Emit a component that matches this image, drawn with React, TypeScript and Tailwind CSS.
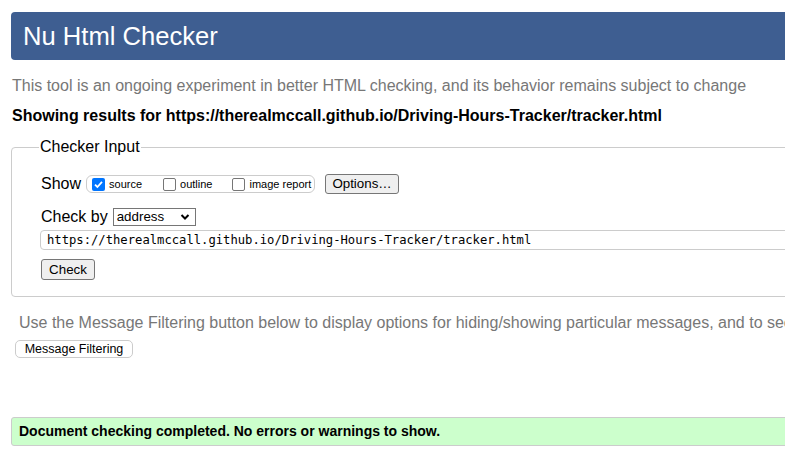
import React from "react";

function Check({ checked }: { checked?: boolean }) {
  if (checked) {
    return (
      <span className="inline-flex h-[13px] w-[13px] items-center justify-center rounded-[2px] bg-[#0075ff]">
        <svg width="11" height="11" viewBox="0 0 11 11">
          <path d="M2 5.6 L4.4 8 L9 2.8" stroke="white" strokeWidth="1.8" fill="none" />
        </svg>
      </span>
    );
  }
  return <span className="inline-block h-[13px] w-[13px] rounded-[2px] border border-[#767676] bg-white" />;
}

export default function App() {
  return (
    <div className="h-[452px] w-[785px] overflow-hidden bg-white">
      <div className="w-[1100px] pl-[11px] pt-[12px] font-['Liberation_Sans',Arial,sans-serif] text-black">
        <div className="flex h-[48px] items-center rounded-l-[4px] bg-[#3e5e91] pl-[12px] text-[25.6px] text-white">
          Nu Html Checker
        </div>
        <p className="mt-[16px] pl-[1px] text-[16px] leading-[20px] text-[#777]">
          This tool is an ongoing experiment in better HTML checking, and its behavior remains subject to change
        </p>
        <p className="mt-[10px] pl-[1px] text-[16px] font-bold leading-[20px]">
          Showing results for https://therealmccall.github.io/Driving-Hours-Tracker/tracker.html
        </p>
        <fieldset className="mt-[11px] rounded-[4px] border border-[#ccc] pb-[16px] pl-[29px]">
          <legend className="-ml-[2px] px-[1px] text-[16px] leading-[20px]">Checker Input</legend>
          <div className="mt-[17px] flex h-[20px] items-center">
            <span className="text-[16px] leading-[20px]">Show</span>
            <div className="ml-[5px] flex h-[18px] w-[229px] items-center rounded-[6px] border border-[#ccc] pl-[5px] text-[11px]">
              <Check checked />
              <span className="ml-[4px]">source</span>
              <span className="ml-[21px] flex"><Check /></span>
              <span className="ml-[4px]">outline</span>
              <span className="ml-[20px] flex"><Check /></span>
              <span className="ml-[4px]">image report</span>
            </div>
            <button className="ml-[10px] flex h-[20px] w-[74px] items-center justify-center rounded-[3px] border border-[#767676] bg-[#efefef] text-[13.33px]">
              Options…
            </button>
          </div>
          <div className="mt-[13px] flex h-[20px] items-center">
            <span className="text-[16px] leading-[20px]">Check by</span>
            <div className="ml-[5px] flex h-[18px] w-[83px] items-center justify-between border border-[#767676] bg-white pl-[3px] pr-[5px] text-[13.33px]">
              <span>address</span>
              <svg width="10" height="8" viewBox="0 0 10 8">
                <path d="M1.5 2 L5 5.5 L8.5 2" stroke="black" strokeWidth="2" fill="none" />
              </svg>
            </div>
          </div>
          <div className="-ml-[1px] mt-[3px] flex h-[20px] items-center rounded-l-[4px] border border-[#ccc] pl-[6px] font-['DejaVu_Sans_Mono',monospace] text-[12.2px]">
            https://therealmccall.github.io/Driving-Hours-Tracker/tracker.html
          </div>
          <button className="mt-[9px] flex h-[21px] w-[54px] items-center justify-center rounded-[3px] border border-[#767676] bg-[#efefef] text-[13.33px]">
            Check
          </button>
        </fieldset>
        <p className="mt-[16px] pl-[8px] text-[16px] leading-[20px] text-[#777]">
          Use the Message Filtering button below to display options for hiding/showing particular messages, and to see total counts of errors and warnings.
        </p>
        <button className="ml-[4px] mt-[7px] flex h-[18px] w-[118px] items-center justify-center rounded-[5px] border border-[#ccc] bg-white text-[12.5px]">
          Message Filtering
        </button>
        <div className="mt-[59px] flex h-[29px] items-center rounded-l-[3px] border border-[#ccc] bg-[#ccffcc] pl-[7px] text-[14px] font-bold">
          Document checking completed. No errors or warnings to show.
        </div>
      </div>
    </div>
  );
}
